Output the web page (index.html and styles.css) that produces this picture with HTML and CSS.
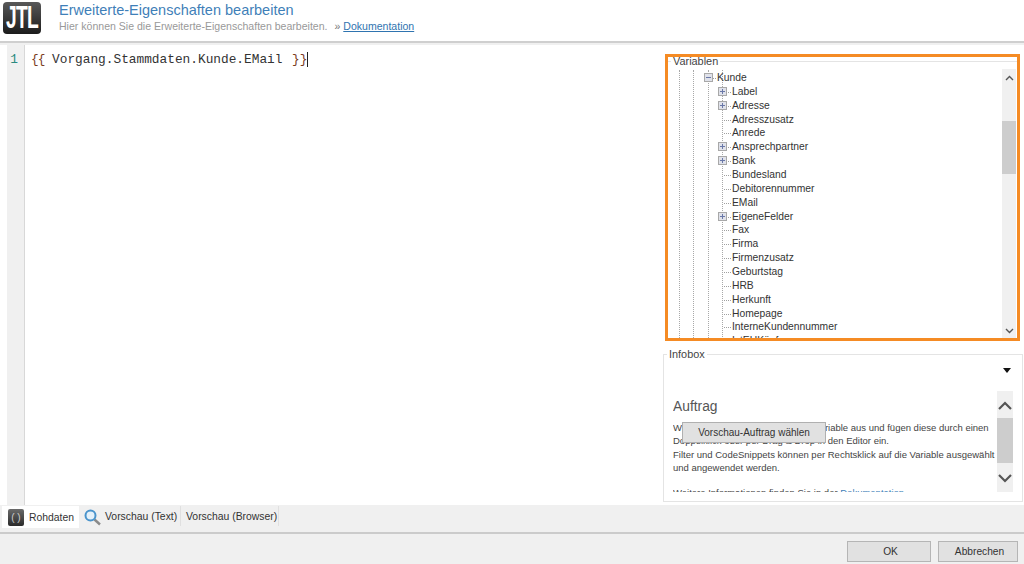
FILE: index.html
```html
<!DOCTYPE html>
<html lang="de">
<head>
<meta charset="utf-8">
<title>Erweiterte-Eigenschaften bearbeiten</title>
<link rel="stylesheet" href="styles.css">
</head>
<body>
<header class="top">
  <div class="logo"><span class="logo-text">JTL</span></div>
  <div class="top-text">
    <h1 class="title">Erweiterte-Eigenschaften bearbeiten</h1>
    <p class="sub">Hier können Sie die Erweiterte-Eigenschaften bearbeiten. <span class="raquo">»</span> <a class="doc" href="#">Dokumentation</a></p>
  </div>
</header>
<main class="main">
  <section class="editor">
    <div class="gutter"><span class="ln">1</span></div>
    <div class="code"><span class="br open">{{</span> Vorgang.Stammdaten.Kunde.EMail <span class="br close">}}</span><span class="caret"></span></div>
  </section>
  <aside class="side">
    <div class="highlight">
      <fieldset class="group vars">
        <legend class="legend">Variablen</legend>
        <div class="tree-wrap">
          <div class="guides"><i></i><i></i><i></i></div>
          <ul class="tree">
            <li class="row lvl1"><span class="tg"><svg viewBox="0 0 9 9"><rect x=".5" y=".5" width="8" height="8" fill="#e0e2ea" stroke="#a8a8a8"/><path d="M2 4.5h5" stroke="#6a78a8"/></svg></span><span class="dash d1"></span>Kunde</li>
            <li class="row"><span class="tg"><svg viewBox="0 0 9 9"><rect x=".5" y=".5" width="8" height="8" fill="#e0e2ea" stroke="#a8a8a8"/><path d="M2 4.5h5M4.5 2v5" stroke="#6a78a8"/></svg></span><span class="dash d1"></span>Label</li>
            <li class="row"><span class="tg"><svg viewBox="0 0 9 9"><rect x=".5" y=".5" width="8" height="8" fill="#e0e2ea" stroke="#a8a8a8"/><path d="M2 4.5h5M4.5 2v5" stroke="#6a78a8"/></svg></span><span class="dash d1"></span>Adresse</li>
            <li class="row"><span class="dash"></span>Adresszusatz</li>
            <li class="row"><span class="dash"></span>Anrede</li>
            <li class="row"><span class="tg"><svg viewBox="0 0 9 9"><rect x=".5" y=".5" width="8" height="8" fill="#e0e2ea" stroke="#a8a8a8"/><path d="M2 4.5h5M4.5 2v5" stroke="#6a78a8"/></svg></span><span class="dash d1"></span>Ansprechpartner</li>
            <li class="row"><span class="tg"><svg viewBox="0 0 9 9"><rect x=".5" y=".5" width="8" height="8" fill="#e0e2ea" stroke="#a8a8a8"/><path d="M2 4.5h5M4.5 2v5" stroke="#6a78a8"/></svg></span><span class="dash d1"></span>Bank</li>
            <li class="row"><span class="dash"></span>Bundesland</li>
            <li class="row"><span class="dash"></span>Debitorennummer</li>
            <li class="row"><span class="dash"></span>EMail</li>
            <li class="row"><span class="tg"><svg viewBox="0 0 9 9"><rect x=".5" y=".5" width="8" height="8" fill="#e0e2ea" stroke="#a8a8a8"/><path d="M2 4.5h5M4.5 2v5" stroke="#6a78a8"/></svg></span><span class="dash d1"></span>EigeneFelder</li>
            <li class="row"><span class="dash"></span>Fax</li>
            <li class="row"><span class="dash"></span>Firma</li>
            <li class="row"><span class="dash"></span>Firmenzusatz</li>
            <li class="row"><span class="dash"></span>Geburtstag</li>
            <li class="row"><span class="dash"></span>HRB</li>
            <li class="row"><span class="dash"></span>Herkunft</li>
            <li class="row"><span class="dash"></span>Homepage</li>
            <li class="row"><span class="dash"></span>InterneKundennummer</li>
            <li class="row"><span class="dash"></span>IstEUKäufer</li>
          </ul>
          <div class="sb sb-tree">
            <svg class="chev" viewBox="0 0 15 8"><path d="M4 6l3.5-3.5L11 6" fill="none" stroke="#555" stroke-width="1.4"/></svg>
            <div class="thumb thumb-tree"></div>
            <svg class="chev chev-end" viewBox="0 0 15 8"><path d="M4 2l3.5 3.5L11 2" fill="none" stroke="#555" stroke-width="1.4"/></svg>
          </div>
        </div>
      </fieldset>
    </div>
    <fieldset class="group info">
      <legend class="legend">Infobox</legend>
      <div class="tri-row"><span class="tri"></span></div>
      <div class="info-body">
        <div class="info-text">
          <h2 class="info-h">Auftrag</h2>
          <p class="info-p">Wählen Sie links im Fenster eine Variable aus und fügen diese durch einen<br>Doppelklick oder per Drag &amp; Drop in den Editor ein.<br>Filter und CodeSnippets können per Rechtsklick auf die Variable ausgewählt<br>und angewendet werden.</p>
          <p class="info-p more">Weitere Informationen finden Sie in der <a class="doc2" href="#">Dokumentation</a></p>
          <button class="pick" type="button">Vorschau-Auftrag wählen</button>
        </div>
        <div class="sb sb-info">
          <svg class="chev2" viewBox="0 0 16 14"><path d="M2 10l6-6 6 6" fill="none" stroke="#555" stroke-width="2.2"/></svg>
          <div class="thumb thumb-info"></div>
          <svg class="chev2 chev-end" viewBox="0 0 16 14"><path d="M2 4l6 6 6-6" fill="none" stroke="#555" stroke-width="2.2"/></svg>
        </div>
      </div>
    </fieldset>
  </aside>
</main>
<nav class="tabs">
  <div class="tab active">
    <span class="tab-ico"><span class="ico-txt">( )</span></span>Rohdaten
  </div>
  <div class="tab t2">
    <svg class="mag" viewBox="0 0 17 17"><path d="M10.5 10.5l5.5 5" stroke="#8a8a8a" stroke-width="2.4"/><circle cx="6.5" cy="6.5" r="5" fill="#e4f1fa" stroke="#4a94cc" stroke-width="2"/></svg>Vorschau (Text)
  </div>
  <div class="tab t3">Vorschau (Browser)</div>
</nav>
<footer class="foot">
  <button class="btn ok" type="button">OK</button>
  <button class="btn cancel" type="button">Abbrechen</button>
</footer>
</body>
</html>
```
FILE: styles.css
```css
* { box-sizing: border-box; }
html, body { margin: 0; height: 564px; overflow: hidden; }
body {
  display: flex;
  flex-direction: column;
  width: 1024px;
  background: #f0f0f0;
  font-family: "Liberation Sans", Arial, sans-serif;
  font-size: 10.5px;
  color: #444;
}
.top {
  height: 43px;
  flex: none;
  display: flex;
  background: #fff;
  border-bottom: 2px solid #cfcfcf;
  padding: 2px 0 0 3px;
}
.logo {
  width: 38px;
  height: 32px;
  border-radius: 4px;
  background: linear-gradient(#585858 0%, #3a3a3a 50%, #1c1c1c 100%);
  display: flex;
  align-items: center;
  justify-content: center;
}
.logo-text {
  color: #fff;
  font-weight: 700;
  font-size: 31px;
  line-height: 32px;
  letter-spacing: -1px;
  transform: scaleX(.62);
}
.top-text { margin-left: 18px; }
.title {
  margin: 0;
  font-size: 14.5px;
  font-weight: 400;
  line-height: 17px;
  color: #3f7fb8;
}
.sub {
  margin: 0;
  font-size: 10.55px;
  line-height: 14px;
  color: #999;
}
.raquo { margin-left: 4px; color: #777; }
.doc { color: #2f74b0; }
.main {
  height: 460px;
  flex: none;
  display: flex;
  margin-top: 2px;
  background: #fff;
}
.editor { width: 663px; display: flex; padding-left: 7px; }
.gutter {
  width: 18px;
  background: #f0f0f0;
  border-right: 1px solid #d8d8d8;
  text-align: center;
  padding: 7px 3px 0 0;
}
.ln { font: 12.8px/15px "Liberation Mono", monospace; color: #2a8a80; }
.code {
  padding: 7px 0 0 6px;
  font: 12.8px/15px "Liberation Mono", "Courier New", monospace;
  color: #333;
  white-space: pre;
}
.br { color: #7a3b1e; }
.open { letter-spacing: -1px; }
.close { margin-left: 2px; }
.caret { display: inline-block; width: 1px; height: 15px; background: #222; vertical-align: top; }
.side { width: 361px; position: relative; }
.highlight {
  position: absolute;
  left: 2px;
  top: 9px;
  width: 355px;
  height: 287px;
  border: 3px solid #f58b24;
  padding: 0;
  overflow: hidden;
}
.group {
  margin: 0;
  padding: 0;
  border: 1px solid #e4e4e4;
  min-width: 0;
}
.legend {
  padding: 0 2px;
  margin-left: 3px;
  font-size: 10.9px;
  line-height: 12px;
  color: #444;
}
.vars { height: 290px; border-width: 1px 0 0; margin-top: -2px; }
.tree-wrap { display: flex; height: 275px; position: relative; margin-top: 3px; }
.guides { position: absolute; left: 0; top: 0; bottom: 0; }
.guides i {
  position: absolute;
  top: 0;
  height: 280px;
  border-left: 1px dotted #a8a8a8;
}
.guides i:nth-child(1) { left: 11px; }
.guides i:nth-child(2) { left: 25px; }
.guides i:nth-child(3) { left: 40px; }
.tree {
  list-style: none;
  margin: 0;
  padding: 1px 0 0;
  flex: 1;
  position: relative;
  background-image: linear-gradient(#a8a8a8 50%, transparent 50%);
  background-size: 1px 2px;
  background-repeat: repeat-y;
  background-position: 54px 16px;
}
.row {
  height: 13.87px;
  line-height: 13.87px;
  padding-left: 64px;
  position: relative;
  color: #333;
  font-size: 10.3px;
  white-space: nowrap;
}
.lvl1 { padding-left: 49px; }
.dash {
  position: absolute;
  left: 56px;
  top: 7px;
  width: 7px;
  border-top: 1px dotted #a0a0a0;
}
.lvl1 .dash { left: 45px; width: 3px; }
.d1 { left: 60px; width: 3px; }
.tg { position: absolute; left: 50px; top: 2px; width: 9px; height: 9px; background: #fff; z-index: 1; line-height: 0; }
.lvl1 .tg { left: 36px; }
.tg svg { width: 9px; height: 9px; display: block; }
.sb { background: #f0f0f0; position: relative; flex: none; }
.sb-tree { width: 14px; margin-right: 1px; height: 271px; margin-top: -1px; }
.chev { position: absolute; left: 0; top: 5px; width: 15px; height: 8px; }
.chev.chev-end { top: auto; bottom: 5px; }
.thumb { position: absolute; left: 0; right: 0; background: #cdcdcd; }
.thumb-tree { top: 52px; height: 53px; }
.side > .info { position: absolute; left: 0; top: 303px; width: 360px; height: 154px; }
.tri-row { height: 31px; display: flex; justify-content: flex-end; padding: 8px 11px 0 0; }
.tri { width: 0; height: 0; border: 4.5px solid transparent; border-top: 5px solid #111; border-bottom: 0; }
.info-body { display: flex; height: 101px; margin-left: 9px; }
.info-text { width: 324px; overflow: hidden; position: relative; padding-top: 8px; white-space: nowrap; }
.info-h { margin: 0; font-size: 13.8px; font-weight: 400; line-height: 16px; color: #555; }
.info-p { margin: 6px 0 0; font-size: 9.5px; line-height: 13.3px; color: #444; }
.more { margin-top: 12px; }
.doc2 { color: #3f7fb8; text-decoration: none; }
.pick {
  position: absolute;
  left: 9px;
  top: 31px;
  width: 144px;
  height: 21px;
  background: #e1e1e1;
  border: 1px solid #b0b0b0;
  font: 10px "Liberation Sans", Arial, sans-serif;
  color: #333;
  padding: 0;
}
.sb-info { width: 16px; height: 101px; }
.chev2 { position: absolute; left: 0; top: 8px; width: 16px; height: 14px; }
.chev2.chev-end { top: auto; bottom: 7px; }
.thumb-info { top: 27px; height: 45px; }
.tabs {
  height: 27px;
  flex: none;
  display: flex;
  align-items: flex-start;
  padding: 1px 0 0 2px;
  font-size: 10.4px;
  color: #333;
}
.tab { display: flex; align-items: center; height: 20px; white-space: nowrap; }
.active { background: #fff; width: 77px; height: 22px; padding: 1px 0 0 6px; }
.tab-ico {
  width: 16px;
  height: 17px;
  border-radius: 2px;
  background: linear-gradient(#6a6a6a, #2a2a2a);
  margin-right: 5px;
  display: flex;
  align-items: center;
  justify-content: center;
  overflow: hidden;
}
.ico-txt { color: #ccc; font-size: 10px; line-height: 1; }
.t2 { width: 102px; padding-left: 5px; border-right: 1px solid #e0e0e0; }
.t2 .mag { margin-right: 4px; }
.mag { width: 17px; height: 17px; flex: none; margin-top: 3px; }
.t3 { width: 98px; padding-left: 5px; border-right: 1px solid #e0e0e0; }
.foot {
  flex: 1;
  display: flex;
  justify-content: flex-end;
  gap: 7px;
  border-top: 2px solid #cbcbcb;
  padding: 7px 6px 0 0;
}
.btn {
  height: 21px;
  background: #e1e1e1;
  border: 1px solid #b5b5b5;
  font: 10.2px "Liberation Sans", Arial, sans-serif;
  color: #333;
  padding: 0 0 0 3px;
}
.ok { width: 84px; }
.cancel { width: 80px; }
```
